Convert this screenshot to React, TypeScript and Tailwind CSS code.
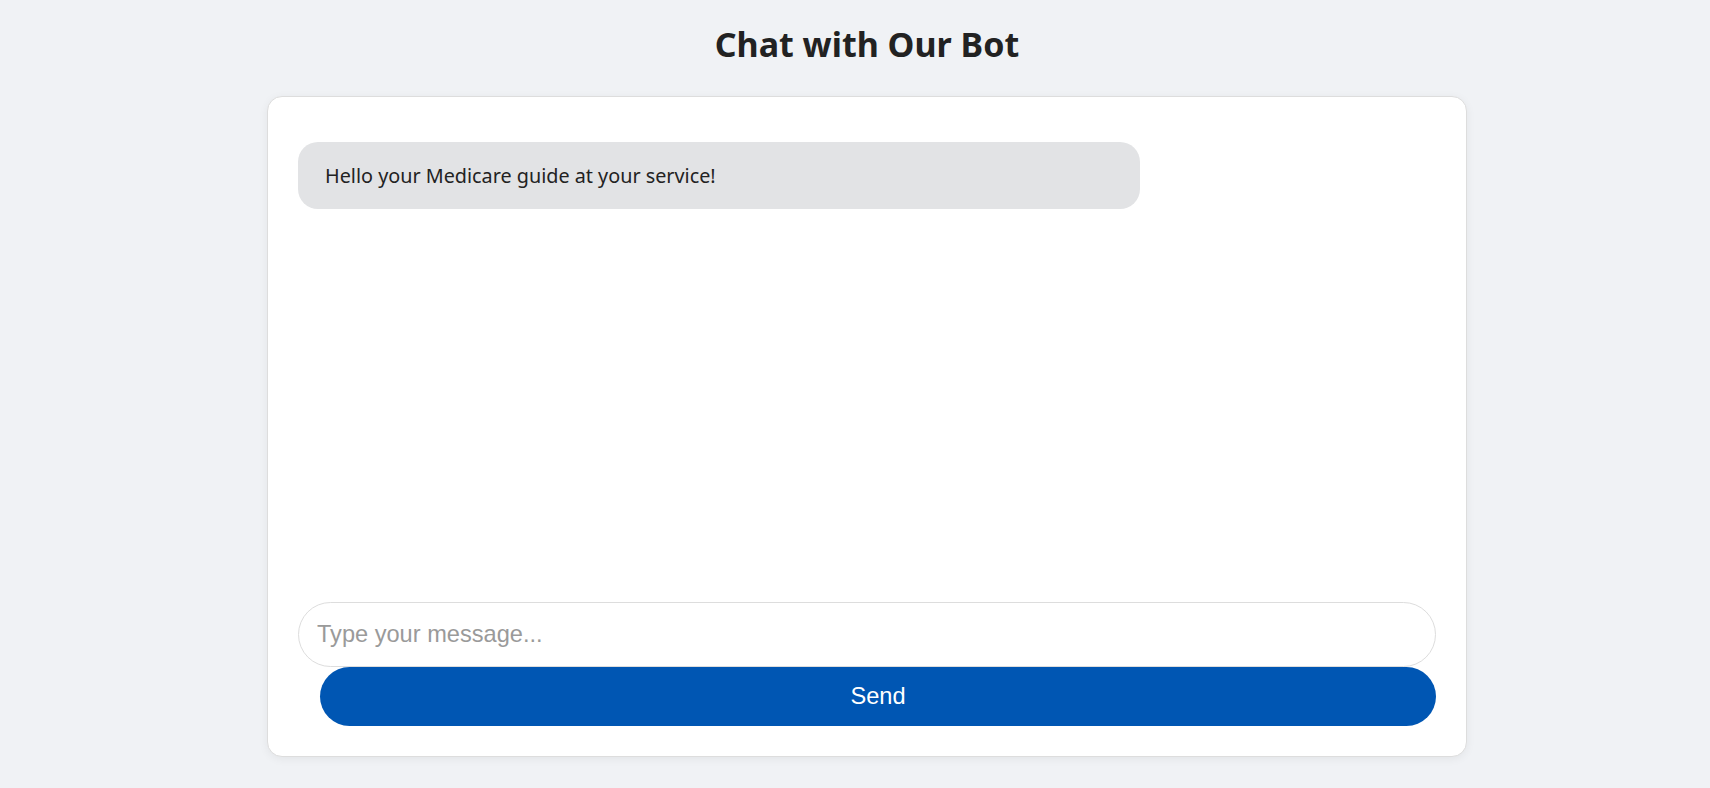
import React from "react";

export default function App() {
  return (
    <div className="min-h-[788px] w-full bg-[#f0f2f5] pl-[24px] flex flex-col items-center" style={{ fontFamily: '"Noto Sans", "Open Sans", sans-serif' }}>
      <h1 className="mt-[20px] h-[48px] leading-[48px] text-[34px] font-bold text-[#222222]">Chat with Our Bot</h1>
      <div className="mt-[28px] w-[1200px] h-[661px] bg-white border border-[#dddddd] rounded-[15px] shadow-[0_2px_10px_rgba(0,0,0,0.06)] p-[30px] flex flex-col">
        <div className="flex-1 pt-[15px]">
          <div className="w-[842px] h-[67px] bg-[#e2e3e5] rounded-[20px] pl-[27px] flex items-center text-[19.8px] text-[#222222]">
            Hello your Medicare guide at your service!
          </div>
        </div>
        <div className="flex flex-col" style={{ fontFamily: '"Liberation Sans", Arial, sans-serif' }}>
          <input
            type="text"
            placeholder="Type your message..."
            className="w-full h-[65px] rounded-full border border-[#dddddd] bg-white pl-[18px] text-[23.6px] text-[#333] placeholder:text-[#9a9a9a] outline-none"
          />
          <button className="ml-[22px] h-[59px] rounded-full bg-[#0056b3] text-white text-[23.6px]">Send</button>
        </div>
      </div>
    </div>
  );
}
